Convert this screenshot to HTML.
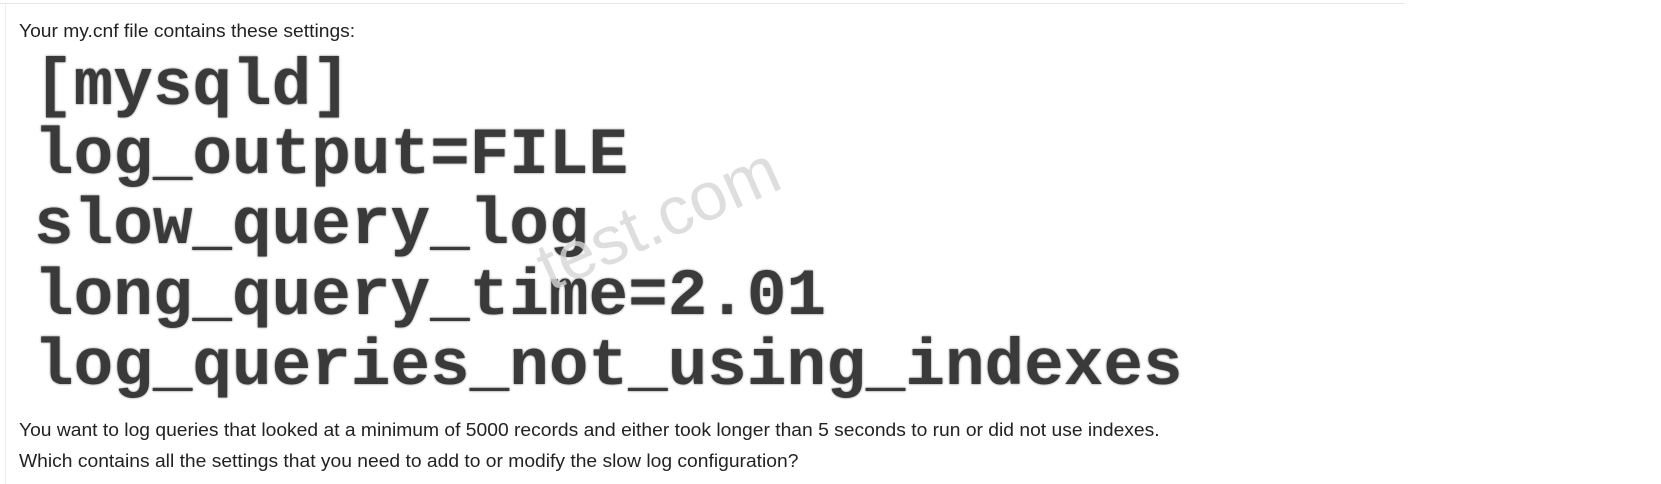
<!DOCTYPE html>
<html><head><meta charset="utf-8"><style>
html,body{margin:0;padding:0;background:#fff;width:1661px;height:484px;overflow:hidden;position:relative}
.top{position:absolute;left:0;top:3px;width:1404px;height:1px;background:#e6e6e6}
.left{position:absolute;left:5px;top:4px;width:1px;height:480px;background:#eee}
.t{position:absolute;left:19px;font-family:"Liberation Sans",Arial,sans-serif;font-size:18px;color:#222;white-space:nowrap;transform:scaleX(1.07);transform-origin:left top}
.c{position:absolute;left:34px;font-family:"Liberation Mono","Courier New",monospace;font-weight:bold;font-size:66px;color:#3a3a3a;white-space:nowrap;line-height:1;text-shadow:0 0 2px #777}
.wm{position:absolute;left:525px;top:235px;font-family:"Liberation Sans",sans-serif;font-size:68px;color:#d6d6d6;transform:rotate(-24deg);transform-origin:left top;opacity:.8}
</style></head><body>
<div class="top"></div><div class="left"></div>
<div class="t" style="top:21px">Your my.cnf file contains these settings:</div>
<div class="c" style="top:54px">[mysqld]</div>
<div class="c" style="top:123px">log_output=FILE</div>
<div class="c" style="top:193px">slow_query_log</div>
<div class="c" style="top:264px">long_query_time=2.01</div>
<div class="c" style="top:334px">log_queries_not_using_indexes</div>
<div class="wm">test.com</div>
<div class="t" style="top:420px">You want to log queries that looked at a minimum of 5000 records and either took longer than 5 seconds to run or did not use indexes.</div>
<div class="t" style="top:451px">Which contains all the settings that you need to add to or modify the slow log configuration?</div>
</body></html>
